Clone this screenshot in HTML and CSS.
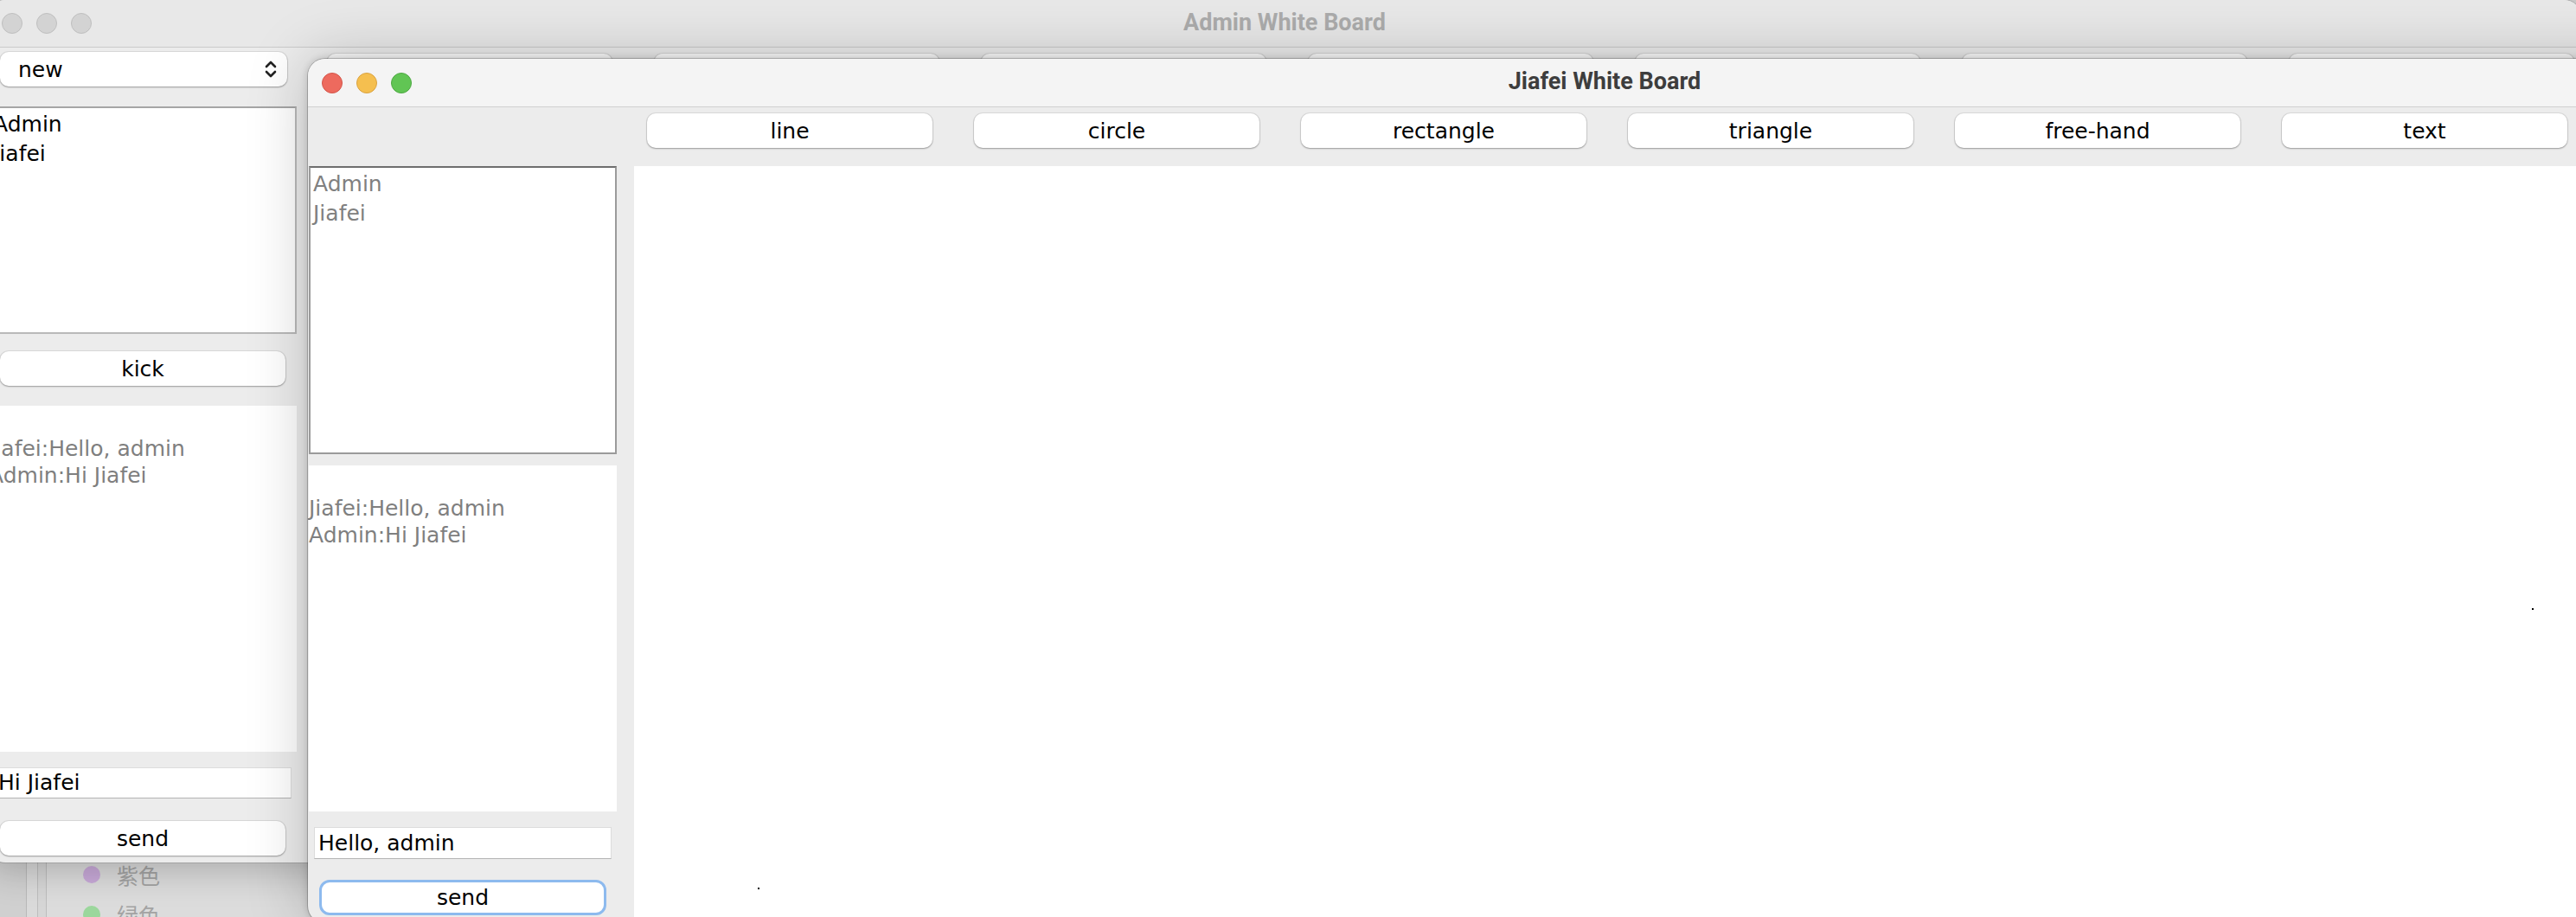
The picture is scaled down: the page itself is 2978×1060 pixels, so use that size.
FILE: index.html
```html
<!DOCTYPE html>
<html>
<head>
  <title>Jiafei White Board</title>
  <link rel="stylesheet" href="styles.css">
</head>
<body>
  <div class="desktop">

    <!-- Finder-Fenster im Hintergrund (nur unten links sichtbar) -->
    <div class="finder">
      <div class="finder-rail"></div>
      <ul class="tags">
        <li><span class="dot purple"></span>紫色</li>
        <li><span class="dot green"></span>绿色</li>
      </ul>
    </div>

    <!-- Admin Fenster (inaktiv) -->
    <div class="window admin">
      <div class="titlebar">
        <div class="lights"><span></span><span></span><span></span></div>
        <div class="title">Admin White Board</div>
      </div>
      <div class="toolbar">
        <div class="combo">
          <span>new</span>
          <svg class="chevron" width="14" height="22" viewBox="0 0 14 22">
            <polyline points="2,8 7,3 12,8" />
            <polyline points="2,14 7,19 12,14" />
          </svg>
        </div>
        <button class="btn">line</button>
        <button class="btn">circle</button>
        <button class="btn">rectangle</button>
        <button class="btn">triangle</button>
        <button class="btn">free-hand</button>
        <button class="btn">text</button>
        <button class="btn">clear</button>
      </div>
      <div class="main">
        <div class="side">
          <div class="users">
            <div>Admin</div>
            <div>Jiafei</div>
          </div>
          <button class="btn wide kick">kick</button>
          <div class="chat">
            <div>Jiafei:Hello, admin</div>
            <div>Admin:Hi Jiafei</div>
          </div>
          <div class="field">Hi Jiafei</div>
          <button class="btn wide send">send</button>
        </div>
        <div class="board"></div>
      </div>
    </div>

    <!-- Jiafei Fenster (aktiv) -->
    <div class="window jiafei">
      <div class="titlebar">
        <div class="lights"><span class="red"></span><span class="yellow"></span><span class="green"></span></div>
        <div class="title">Jiafei White Board</div>
      </div>
      <div class="toolbar">
        <button class="btn">line</button>
        <button class="btn">circle</button>
        <button class="btn">rectangle</button>
        <button class="btn">triangle</button>
        <button class="btn">free-hand</button>
        <button class="btn">text</button>
      </div>
      <div class="main">
        <div class="side">
          <div class="users">
            <div>Admin</div>
            <div>Jiafei</div>
          </div>
          <div class="chat">
            <div>Jiafei:Hello, admin</div>
            <div>Admin:Hi Jiafei</div>
          </div>
          <div class="field">Hello, admin</div>
          <button class="btn wide send focused">send</button>
        </div>
        <div class="board">
          <span class="pixel" style="left: 2194px; top: 511px;"></span>
          <span class="pixel" style="left: 143px; top: 834px;"></span>
        </div>
      </div>
    </div>

  </div>
</body>
</html>
```

FILE: styles.css
```css
* {
  box-sizing: border-box;
}

body {
  margin: 0;
  width: 2978px;
  height: 1060px;
  overflow: hidden;
  background: #d3d3d3;
  font-family: "DejaVu Sans", sans-serif;
  font-size: 25px;
}

.desktop {
  position: relative;
  width: 2978px;
  height: 1060px;
  overflow: hidden;
}

/* Finder im Hintergrund */

.finder {
  position: absolute;
  left: 0;
  top: 940px;
  width: 380px;
  height: 120px;
  display: flex;
  background: #dcdcdc;
}

.finder-rail {
  width: 54px;
  border-right: 1px solid #bdbdbd;
  background: linear-gradient(to right, #d0d0d0 30px, #b9b9b9 30px, #b9b9b9 31px, #dadada 31px, #dadada 43px, #bdbdbd 43px, #bdbdbd 44px, #d6d6d6 44px);
}

.tags {
  list-style: none;
  margin: 0;
  padding: 48px 0 0 42px;
  color: #a3a3a3;
  font-family: "Noto Sans CJK SC", sans-serif;
  font-size: 25px;
}

.tags li {
  height: 46px;
  display: flex;
  align-items: center;
  gap: 19px;
}

.dot {
  width: 20px;
  height: 20px;
  border-radius: 50%;
}

.dot.purple {
  background: #c9aad9;
}

.dot.green {
  background: #9bd79c;
}

/* Fenster */

.window {
  position: absolute;
  display: flex;
  flex-direction: column;
  background: #ececec;
  border-radius: 20px;
  overflow: hidden;
}

.admin {
  left: -14px;
  top: 0;
  width: 2998px;
  height: 997px;
  box-shadow: 0 10px 40px rgba(0, 0, 0, 0.22), 0 0 0 1px rgba(0, 0, 0, 0.12);
}

.jiafei {
  left: 356px;
  top: 68px;
  width: 2998px;
  height: 999px;
  box-shadow: 0 0 70px rgba(0, 0, 0, 0.22), 0 0 10px rgba(0, 0, 0, 0.18), 0 0 0 1px rgba(0, 0, 0, 0.2);
}

.titlebar {
  height: 56px;
  flex-shrink: 0;
  display: grid;
  grid-template-columns: 1fr auto 1fr;
  align-items: center;
  background: #f4f4f4;
  border-bottom: 1px solid #d0d0d0;
}

.admin .titlebar {
  height: 55px;
  background: #e8e8e8;
  border-bottom-color: #cacaca;
}

.lights {
  display: flex;
  gap: 16px;
  padding-left: 16px;
}

.lights span {
  width: 24px;
  height: 24px;
  border-radius: 50%;
  background: #d3d3d3;
  border: 1px solid #bfbfbf;
}

.lights .red {
  background: #ed6a5e;
  border-color: #d3554a;
}

.lights .yellow {
  background: #f5bf4f;
  border-color: #d9a241;
}

.lights .green {
  background: #61c554;
  border-color: #4ea843;
}

.title {
  font-family: Roboto, "Liberation Sans", sans-serif;
  font-weight: 700;
  font-size: 27px;
  color: #3d3d3d;
  margin-top: -4px;
}

.admin .title {
  color: #acacac;
  margin-top: -2px;
}

/* Werkzeugleiste */

.toolbar {
  height: 68px;
  flex-shrink: 0;
  display: flex;
  align-items: flex-start;
  gap: 48px;
  padding: 7px 0 0 392px;
}

.admin .toolbar {
  padding: 5px 0 0 14px;
}

.admin .toolbar .btn {
  margin-top: 2px;
}

.btn {
  width: 330px;
  height: 40px;
  flex-shrink: 0;
  padding: 0;
  background: #fff;
  color: #000;
  border: none;
  border-radius: 10px;
  box-shadow: 0 0 0 1px rgba(0, 0, 0, 0.07), 0 1px 2px rgba(0, 0, 0, 0.3);
  font-family: "DejaVu Sans", sans-serif;
  font-size: 25px;
}

.combo {
  width: 332px;
  height: 40px;
  margin-right: -2px;
  flex-shrink: 0;
  display: flex;
  align-items: center;
  justify-content: space-between;
  padding: 0 12px 0 21px;
  background: #fff;
  border-radius: 10px;
  box-shadow: 0 0 0 1px rgba(0, 0, 0, 0.07), 0 1px 2px rgba(0, 0, 0, 0.3);
}

.chevron polyline {
  fill: none;
  stroke: #222;
  stroke-width: 2.6;
  stroke-linecap: round;
  stroke-linejoin: round;
}

/* Hauptbereich */

.main {
  flex: 1;
  display: flex;
  gap: 20px;
  padding-left: 1px;
}

.side {
  width: 356px;
  flex-shrink: 0;
  display: flex;
  flex-direction: column;
}

.users {
  height: 333px;
  padding: 2px 0 0 3px;
  background: #fff;
  border: 2px solid #9b9b9b;
  border-top-color: #6e6e6e;
  color: #808080;
  line-height: 34px;
}

.admin .users {
  height: 263px;
  border-color: #b9b9b9;
  border-top-color: #a5a5a5;
  color: #000;
}

.chat {
  height: 400px;
  margin-top: 13px;
  padding-top: 34px;
  background: #fff;
  color: #7f7f7f;
  line-height: 31px;
}

.admin .chat {
  margin-top: 23px;
}

.field {
  width: 344px;
  height: 37px;
  margin: 18px 0 0 6px;
  padding-left: 4px;
  background: #fff;
  border: 1px solid #dcdcdc;
  border-bottom-color: #b3b3b3;
  line-height: 35px;
  color: #000;
}

.admin .field {
  height: 36px;
  line-height: 34px;
}

.wide {
  margin-left: 13px;
}

.kick {
  margin-top: 20px;
}

.send {
  margin-top: 26px;
}

.send.focused {
  width: 332px;
  height: 41px;
  margin: 24px 0 0 12px;
  border: 3px solid #8dbaee;
  border-radius: 12px;
  box-shadow: none;
}

.board {
  flex: 1;
  position: relative;
  background: #fff;
}

.pixel {
  position: absolute;
  width: 2px;
  height: 2px;
  background: #000;
}
```
